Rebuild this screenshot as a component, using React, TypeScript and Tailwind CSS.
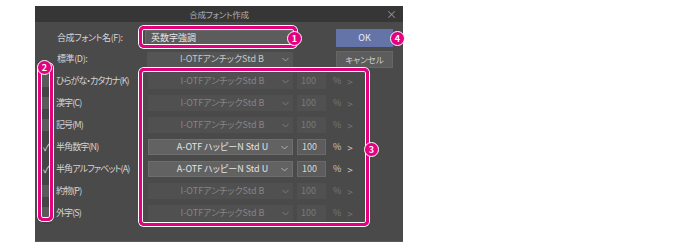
const rows = [
  { label: 'ひらがな・カタカナ(K)', font: 'I-OTFアンチックStd B', on: false },
  { label: '漢字(C)', font: 'I-OTFアンチックStd B', on: false },
  { label: '記号(M)', font: 'I-OTFアンチックStd B', on: false },
  { label: '半角数字(N)', font: 'A-OTF ハッピーN Std U', on: true },
  { label: '半角アルファベット(A)', font: 'A-OTF ハッピーN Std U', on: true },
  { label: '約物(P)', font: 'I-OTFアンチックStd B', on: false },
  { label: '外字(S)', font: 'I-OTFアンチックStd B', on: false },
];

function Chevron({ className }: { className?: string }) {
  return (
    <svg width="7" height="5" viewBox="0 0 7 5" className={className}>
      <path d="M0.5 1 L3.5 4 L6.5 1" fill="none" stroke="currentColor" strokeWidth="1" />
    </svg>
  );
}

function Badge({ n, className }: { n: number; className: string }) {
  return (
    <div
      className={`absolute w-[15px] h-[15px] rounded-full bg-[#e4007f] border border-white flex items-center justify-center text-[9px] font-bold text-white leading-none ${className}`}
    >
      {n}
    </div>
  );
}

function Highlight({ className }: { className: string }) {
  return (
    <div
      className={`absolute border-[3px] border-[#e4007f] rounded-[5px] shadow-[0_0_0_1px_#ffffff,inset_0_0_0_1px_#ffffff] pointer-events-none ${className}`}
    />
  );
}

export default function App() {
  return (
    <div
      className="w-[693px] h-[249px] bg-white pt-[6px] pl-[35px] [font-feature-settings:'palt']"
      style={{ fontFamily: '"Noto Sans CJK JP", "Noto Sans", sans-serif' }}
    >
      <div className="w-[368px] h-[236px] flex flex-col">
        {/* title bar */}
        <div className="h-[16px] bg-[#363636] relative flex items-center justify-center">
          <span className="text-[8.5px] text-[#b0b0b0] tracking-[-0.3px]">合成フォント作成</span>
          <span className="absolute right-[6px] top-[1px] text-[11px] text-[#9a9a9a] leading-[14px]">×</span>
        </div>

        {/* body */}
        <div className="flex-1 bg-[#4a4a4a] relative flex flex-col text-[9px] text-[#d4d4d4] border-b border-[#5a5a5a]">
          <div className="h-[20px] mt-[6px] flex items-center">
            <span className="ml-[22px] w-[88px] shrink-0 whitespace-nowrap tracking-[-0.4px]">合成フォント名(F):</span>
            <div className="w-[149px] h-[16px] shrink-0 bg-[#5c5c5c] border border-[#6a6a6a] flex items-center px-[5px] text-[#e8e8e8]">
              英数字強調
            </div>
            <div className="ml-[42px] w-[57px] h-[18px] shrink-0 bg-[#6474a8] flex items-center justify-center text-[9px] text-[#e8ecff]">
              OK
            </div>
          </div>
          <div className="h-[22px] flex items-center">
            <span className="ml-[22px] w-[90px] shrink-0 tracking-[-0.4px]">標準(D):</span>
            <div className="w-[146px] h-[15px] shrink-0 bg-[#555555] flex items-center relative text-[#c8c8c8]">
              <span className="flex-1 text-center text-[9px] pl-[4px]">I-OTFアンチックStd B</span>
              <Chevron className="absolute right-[4px] text-[#a0a0a0]" />
            </div>
            <div className="ml-[43px] w-[57px] h-[17px] shrink-0 bg-[#5c5c5c] border border-[#666666] flex items-center justify-center text-[8.5px] text-[#cfcfcf]">
              キャンセル
            </div>
          </div>
          {rows.map((r) => (
            <div key={r.label} className="h-[22px] flex items-center">
              <div className="ml-[7px] w-[9px] h-[22px] shrink-0 flex items-center justify-center bg-[#444444]">
                {r.on ? (
                  <span className="text-[10px] text-[#e0e0e0] leading-none">✓</span>
                ) : (
                  <div className="w-[9px] h-[12px] bg-[#5a5a5a]" />
                )}
              </div>
              <span className="ml-[5px] w-[92px] shrink-0 whitespace-nowrap tracking-[-0.9px]">{r.label}</span>
              <div
                className={`w-[145px] h-[16px] shrink-0 flex items-center relative ${
                  r.on ? 'bg-[#626262] border border-[#6e6e6e] text-[#e4e4e4]' : 'bg-[#505050] text-[#858585]'
                }`}
              >
                <span className="flex-1 text-center text-[9px] pl-[4px]">{r.font}</span>
                <Chevron className={`absolute right-[4px] ${r.on ? 'text-[#b0b0b0]' : 'text-[#7a7a7a]'}`} />
              </div>
              <div
                className={`ml-[4px] w-[29px] h-[16px] shrink-0 flex items-center px-[4px] text-[9px] ${
                  r.on ? 'bg-[#5c5c5c] border border-[#6a6a6a] text-[#d8d8d8]' : 'bg-[#505050] text-[#7a7a7a]'
                }`}
              >
                100
              </div>
              <span className={`ml-[7px] text-[9px] ${r.on ? 'text-[#c8c8c8]' : 'text-[#767676]'}`}>%</span>
              <span className={`ml-[6px] text-[10px] ${r.on ? 'text-[#c8c8c8]' : 'text-[#767676]'}`}>&gt;</span>
            </div>
          ))}

          {/* annotations */}
          <Highlight className="left-[104px] top-[4px] w-[158px] h-[22px]" />
          <Highlight className="left-[3px] top-[41px] w-[15px] h-[158px]" />
          <Highlight className="left-[104px] top-[46px] w-[230px] h-[158px]" />
          <Badge n={1} className="left-[252px] top-[9px]" />
          <Badge n={2} className="left-[2px] top-[38px]" />
          <Badge n={3} className="left-[329px] top-[120px]" />
          <Badge n={4} className="left-[355px] top-[9px]" />
        </div>
      </div>
    </div>
  );
}
